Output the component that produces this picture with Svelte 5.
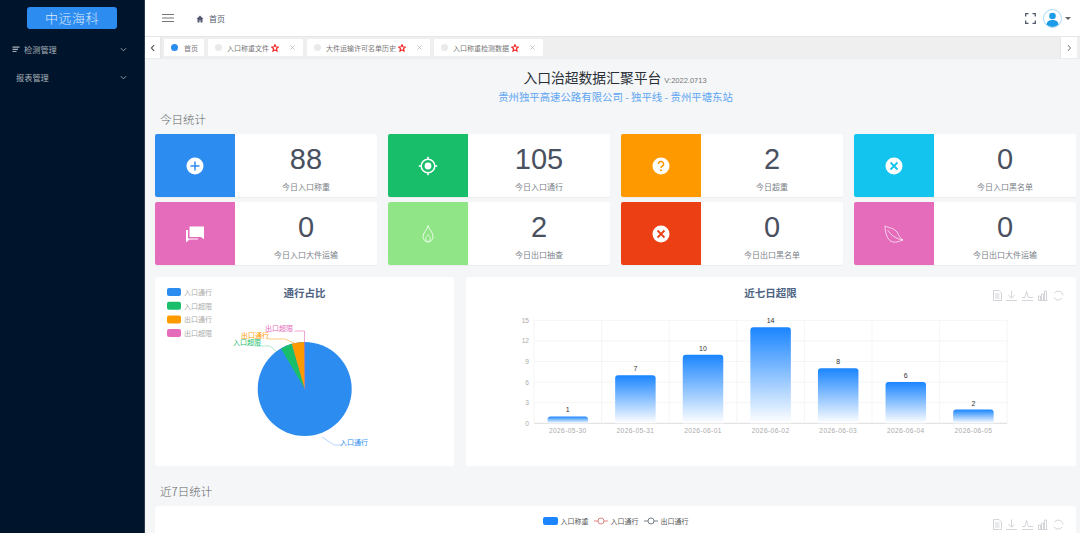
<script>
  const cards = [
    { n: '88', l: '今日入口称重', c: '#2d8cf0', i: 'plus' },
    { n: '105', l: '今日入口通行', c: '#19be6b', i: 'target' },
    { n: '2', l: '今日超重', c: '#ff9900', i: 'help' },
    { n: '0', l: '今日入口黑名单', c: '#13c4ef', i: 'close' },
    { n: '0', l: '今日入口大件运输', c: '#e46cbb', i: 'chat' },
    { n: '2', l: '今日出口抽查', c: '#90e686', i: 'flame' },
    { n: '0', l: '今日出口黑名单', c: '#ed3f14', i: 'close' },
    { n: '0', l: '今日出口大件运输', c: '#e46cbb', i: 'leaf' }
  ];
  const tabs = [
    { t: '入口称重文件', w: 95 },
    { t: '大件运输许可名单历史', w: 123 },
    { t: '入口称重检测数据', w: 109 }
  ];
  const legend = [
    { t: '入口通行', c: '#2d8cf0' },
    { t: '入口超限', c: '#19be6b' },
    { t: '出口通行', c: '#ff9900' },
    { t: '出口超限', c: '#e46cbb' }
  ];
  const X0 = 68, BAND = 67.6, Y0 = 146.3, H = 103;
  const bars = [
    { d: '2026-05-30', v: 1 },
    { d: '2026-05-31', v: 7 },
    { d: '2026-06-01', v: 10 },
    { d: '2026-06-02', v: 14 },
    { d: '2026-06-03', v: 8 },
    { d: '2026-06-04', v: 6 },
    { d: '2026-06-05', v: 2 }
  ];
  const ticks = [0, 3, 6, 9, 12, 15];
  const yOf = (v) => Y0 - (v / 15) * H;
  const barPath = (i, v) => {
    const x = X0 + BAND * i + (BAND - 40.5) / 2, y = yOf(v), r = 3;
    return `M${x} ${Y0}V${y + r}Q${x} ${y} ${x + r} ${y}H${x + 40.5 - r}Q${x + 40.5} ${y} ${x + 40.5} ${y + r}V${Y0}Z`;
  };
</script>

{#snippet tools()}
  <svg class="tools" viewBox="0 0 71 11" width="71" height="11" fill="none" stroke="#c8cacf" stroke-width="0.8">
    <path d="M.5.500h5.500l2.500 2.500v7.500h-8z M2 4h4.500M2 6h4.500M2 8h4.500" />
    <path d="M18.500.5v7.500M15.500 5.200l3 3 3-3M13 10.500h11" />
    <path d="M29 10.500h11M29 7.500h3l1.500-6 2 6h4.500" />
    <path d="M45 10.500h9.500M45.500 10v-4h2v4M48.500 10V4h2v6M51.500 10V1h2v9" />
    <path d="M69 3A4.600 4.600 0 0 0 61.200 3.500M61 7.500A4.600 4.600 0 0 0 69 8M69 3A4.600 4.600 0 0 1 70 5.500" />
  </svg>
{/snippet}

{#snippet star()}
  <svg class="star" viewBox="0 0 10 10" width="8" height="8">
    <path d="M5 .8l1.200 2.800 3 .3-2.300 2 .7 3L5 7.300 2.400 8.900l.7-3-2.300-2 3-.3z" fill="#fff" stroke="#f01414" stroke-width="1.300" />
  </svg>
{/snippet}

{#snippet icon(kind, color)}
  <svg viewBox="0 0 20 20" width="20" height="20" fill="none">
    {#if kind === 'plus'}
      <circle cx="10" cy="10" r="8.500" fill="#fff" />
      <path d="M10 5.500v9M5.500 10h9" stroke={color} stroke-width="1.500" />
    {:else if kind === 'target'}
      <circle cx="10" cy="10" r="6.800" stroke="#fff" stroke-width="1.500" />
      <circle cx="10" cy="10" r="3.400" fill="#fff" />
      <path d="M10 .8v2.500M10 16.700v2.500M.8 10h2.500M16.700 10h2.500" stroke="#fff" stroke-width="1.500" />
    {:else if kind === 'help'}
      <circle cx="10" cy="10" r="8.500" fill="#fff" />
      <path d="M7.500 8a2.500 2.500 0 1 1 3.700 2.200c-.8.500-1.200 1-1.200 1.800" stroke={color} stroke-width="1.500" />
      <circle cx="10" cy="14.300" r="1" fill={color} />
    {:else if kind === 'close'}
      <circle cx="10" cy="10" r="8.500" fill="#fff" />
      <path d="M6.500 6.500l7 7M13.500 6.500l-7 7" stroke={color} stroke-width="1.800" />
    {:else if kind === 'chat'}
      <path d="M4.500 2.500H19v12.800L16 13H4.500z" fill="#fff" />
      <path d="M1 6h2v8.500h10v1H4.500L1 18.500z" fill="#fff" />
    {:else if kind === 'flame'}
      <path d="M10 1.500c.5 3 5 6.500 5 11a5 5.500 0 0 1-10 0c0-4 4.500-6.500 5-11z" stroke="#fff" stroke-width=".8" />
      <path d="M10 10.500c-.8 1.500-2.300 2.500-2.300 4.500a2.300 2.500 0 0 0 4.600 0c0-2-1.500-3-2.300-4.500z" stroke="#fff" stroke-width=".6" />
    {:else if kind === 'leaf'}
      <path d="M1 2C5 4 10 4 13 8C15 11 16 15 19 16C15 17.500 11 19 7.500 17.500C3 15.500 1 8 1 2z" stroke="#fff" stroke-width=".7" />
      <path d="M3.500 6C7 11 12 15 19 16" stroke="#fff" stroke-width=".7" />
    {/if}
  </svg>
{/snippet}

<div class="app">
  <aside class="side">
    <div class="logo">中远海科</div>
    <div class="menu one">
      <svg viewBox="0 0 8 8" width="8" height="8"><path d="M.5 1.500h7v1.200h-7zM.5 3.700h5.500v1.200H.5zM.5 5.900h4v1.200h-4z" fill="#a8b0ba" /></svg>
      <span>检测管理</span>
      <svg class="chev" viewBox="0 0 8 8" width="7" height="7"><path d="M1 2.500l3 3 3-3" fill="none" stroke="#a8b0ba" /></svg>
    </div>
    <div class="menu two">
      <span>报表管理</span>
      <svg class="chev" viewBox="0 0 8 8" width="7" height="7"><path d="M1 2.500l3 3 3-3" fill="none" stroke="#a8b0ba" /></svg>
    </div>
  </aside>

  <main class="main">
    <header class="top">
      <svg class="burger" viewBox="0 0 12 8" width="12" height="8"><path d="M0 .5h12M0 4h12M0 7.500h12" stroke="#777" stroke-width="1" /></svg>
      <svg class="home" viewBox="0 0 8 8" width="8" height="8"><path d="M4 .5L.5 4h1v3.500h2V5.200h1v2.300h2V4h1z" fill="#515a6e" /></svg>
      <span class="crumb">首页</span>
      <svg class="full" viewBox="0 0 11 11" width="11" height="11" fill="none" stroke="#515a6e" stroke-width="1.300"><path d="M.7 3.500V.7h2.800M7.500.7h2.800v2.800M10.300 7.500v2.800H7.500M3.500 10.300H.7V7.500" /></svg>
      <svg class="avatar" viewBox="0 0 19 19" width="19" height="19">
        <circle cx="9.500" cy="9.500" r="9" fill="#fff" stroke="#8fd0f5" stroke-width=".8" />
        <circle cx="9.500" cy="7" r="3.300" fill="#1c9be6" />
        <path d="M3.500 15.500c.5-3.500 3-4.500 6-4.500s5.500 1 6 4.500a8.500 8.500 0 0 1-12 0z" fill="#1c9be6" />
      </svg>
      <span class="caret"></span>
    </header>

    <nav class="tabbar">
      <div class="arrow"><svg viewBox="0 0 8 10" width="6" height="8"><path d="M5.500 1L2 5l3.500 4" fill="none" stroke="#444" stroke-width="1.500" /></svg></div>
      <div class="tabs">
        <div class="tab home-tab"><i class="dot on"></i><span>首页</span></div>
        {#each tabs as t}
          <div class="tab" style="width:{t.w}px">
            <i class="dot"></i><span>{t.t}</span>{@render star()}
            <svg class="x" viewBox="0 0 6 6" width="5" height="5"><path d="M.5.500l5 5M5.500.5l-5 5" stroke="#aaa" stroke-width=".7" /></svg>
          </div>
        {/each}
      </div>
      <div class="arrow right"><svg viewBox="0 0 8 10" width="6" height="8"><path d="M2.500 1L6 5 2.500 9" fill="none" stroke="#555" stroke-width="1.100" /></svg></div>
    </nav>

    <section class="content">
      <div class="title">
        <h1>入口治超数据汇聚平台</h1><small>V:2022.0713</small>
      </div>
      <p class="sub">贵州独平高速公路有限公司 - 独平线 - 贵州平塘东站</p>
      <h2>今日统计</h2>

      <div class="cards">
        {#each cards as c}
          <div class="card">
            <div class="ico" style="background:{c.c}">{@render icon(c.i, c.c)}</div>
            <div class="info">
              <div class="num">{c.n}</div>
              <div class="lab">{c.l}</div>
            </div>
          </div>
        {/each}
      </div>

      <div class="charts">
        <div class="panel">
          <svg viewBox="0 0 299 189" width="299" height="189">
            {#each legend as l, i}
              <rect x="12" y={11 + i * 13.700} width="14" height="8" rx="2" fill={l.c} />
              <text x="29" y={18 + i * 13.700} class="lg">{l.t}</text>
            {/each}
            <text x="149.500" y="20" class="ct">通行占比</text>
            <circle cx="149.700" cy="112" r="47" fill="#2d8cf0" />
            <path d="M149.700 112L126 71.600A47 47 0 0 1 136.700 66.800Z" fill="#19be6b" />
            <path d="M149.700 112L136.700 66.800A47 47 0 0 1 149.300 65Z" fill="#ff9900" />
            <path d="M149.700 112V65" stroke="#e46cbb" stroke-width=".5" />
            <path d="M122 75l-7-6h-15" fill="none" stroke="#19be6b" stroke-width=".5" opacity=".7" />
            <path d="M141 67l-11-5h-17" fill="none" stroke="#ff9900" stroke-width=".5" />
            <path d="M149.500 65V54h-10" fill="none" stroke="#e46cbb" stroke-width=".6" />
            <path d="M167 160l12 8h9" fill="none" stroke="#2d8cf0" stroke-width=".5" opacity=".7" />
            <text x="110" y="54" class="pl" fill="#e46cbb">出口超限</text>
            <text x="86" y="61" class="pl" fill="#ff9900">出口通行</text>
            <text x="78" y="68" class="pl" fill="#19be6b">入口超限</text>
            <text x="185" y="168" class="pl" fill="#2d8cf0">入口通行</text>
          </svg>
        </div>

        <div class="panel">
          <svg viewBox="0 0 610 189" width="610" height="189">
            <defs>
              <linearGradient id="barg" x1="0" y1="0" x2="0" y2="1">
                <stop offset="0" stop-color="#1a85ff" />
                <stop offset="1" stop-color="#ffffff" />
              </linearGradient>
            </defs>
            <text x="304.500" y="20" class="ct">近七日超限</text>
            {#each ticks as t}
              <path d="M{X0} {yOf(t)}H{X0 + BAND * 7}" stroke={t ? '#f2f2f4' : '#dcdcdc'} stroke-width={t ? 0.800 : 1} />
              <text x={X0 - 5} y={yOf(t) + 2.500} class="ax" text-anchor="end">{t}</text>
            {/each}
            {#each Array(8) as _, i}
              <path d="M{X0 + BAND * i} {yOf(15)}V{Y0}" stroke="#f2f2f4" stroke-width=".8" />
            {/each}
            {#each bars as b, i}
              <path d={barPath(i, b.v)} fill="url(#barg)" />
              <text x={X0 + BAND * i + BAND / 2} y={yOf(b.v) - 4} class="val" text-anchor="middle">{b.v}</text>
              <text x={X0 + BAND * i + BAND / 2} y="156" class="ax date" text-anchor="middle">{b.d}</text>
            {/each}
          </svg>
          <div class="tb">{@render tools()}</div>
        </div>
      </div>

      <h2 class="h7">近7日统计</h2>
      <div class="panel last">
        <div class="lgd">
          <i class="sw"></i><span>入口称重</span>
          <svg viewBox="0 0 14 8" width="14" height="8"><path d="M0 4h4M10 4h4" stroke="#d9534f" stroke-width=".7" /><circle cx="7" cy="4" r="3" fill="#fff" stroke="#d9534f" stroke-width=".7" /></svg><span>入口通行</span>
          <svg viewBox="0 0 14 8" width="14" height="8"><path d="M0 4h4M10 4h4" stroke="#3d4a5a" stroke-width=".7" /><circle cx="7" cy="4" r="3" fill="#fff" stroke="#3d4a5a" stroke-width=".7" /></svg><span class="end">出口通行</span>
        </div>
        <div class="tb">{@render tools()}</div>
      </div>
    </section>
  </main>
</div>

<style>
  :global(body) { margin: 0; overflow: hidden; background: #f4f6f8; }
  .app {
    display: flex; width: 1080px; height: 533px; overflow: hidden;
    font-family: "Noto Sans CJK SC", "Liberation Sans", sans-serif;
  }
  .side { width: 144px; flex: none; background: #00152b; border-right: 1px solid #2a3a4c; }
  .logo {
    margin: 7px 27px 0; height: 22px; border-radius: 3px; background: #2d8cf0; color: #dbe9fb;
    font-size: 13px; font-weight: 300; line-height: 22px; text-align: center; letter-spacing: .5px;
  }
  .menu {
    display: flex; align-items: center; gap: 4px; height: 14px; color: #a8b0ba; font-size: 8.200px;
    padding: 0 17px 0 12px;
  }
  .menu.one { margin-top: 13px; }
  .menu.two { margin-top: 14px; padding-left: 16px; }
  .chev { margin-left: auto; }

  .main { flex: 1; min-width: 0; display: flex; flex-direction: column; }
  .top { height: 36px; flex: none; background: #fff; display: flex; align-items: center; padding-left: 17px; }
  .burger { margin-right: 22px; }
  .home { margin-right: 5px; margin-top: 1px; }
  .crumb { font-size: 8px; color: #515a6e; }
  .full { margin-left: auto; margin-right: 7px; }
  .caret {
    width: 0; height: 0; border: 3px solid transparent; border-top: 3.500px solid #666; border-bottom: 0;
    margin-right: 9px; margin-left: 3px;
  }

  .tabbar {
    height: 23px; flex: none; display: flex; background: #efefef; border-top: 1px solid #e6e6e6; box-sizing: border-box;
    border-bottom: 1px solid #ececec;
  }
  .arrow { width: 15px; background: #fff; display: flex; align-items: center; justify-content: center; flex: none; border-right: 2px solid #e9e9e9; box-sizing: content-box; }
  .arrow.right { margin-left: auto; margin-right: 3px; width: 16px; border-right: 0; border-left: 1px solid #e6e6e6; }
  .tabs { display: flex; gap: 4px; padding: 2px 0 0 2px; }
  .tab {
    height: 17px; background: #fff; display: flex; align-items: center; box-sizing: border-box; padding-left: 7px;
    font-size: 7px; color: #777; position: relative; border-radius: 1px;
  }
  .home-tab { width: 40px; }
  .dot { width: 7px; height: 7px; border-radius: 50%; background: #e8eaec; margin-right: 6px; flex: none; }
  .tab:not(.home-tab) span { margin-left: -1px; margin-right: 2px; }
  .dot.on { background: #2d8cf0; }
  .star { flex: none; }
  .x { margin-left: auto; margin-right: 8px; }

  .content { flex: 1; min-height: 0; background: #f4f6f8; padding: 7px 4px 0 10px; }
  .title { display: flex; justify-content: center; align-items: baseline; height: 23px; color: #2a2f36; padding-right: 1px; }
  h1 { margin: 0; font-size: 13.800px; font-weight: 400; line-height: 23px; }
  small { font-family: "Liberation Sans", sans-serif; font-size: 7.500px; color: #777; margin-left: 3px; }
  .sub { margin: 0; text-align: center; font-size: 10.400px; line-height: 15px; color: #5ea5f2; }
  h2 { margin: 6px 0 0 5px; font-size: 11.500px; font-weight: 300; line-height: 18px; color: #666; height: 18px; }
  .cards { display: grid; grid-template-columns: repeat(4, 222px); gap: 5px 11px; margin-top: 6px; }
  .card {
    height: 63px; background: #fff; display: flex; border-radius: 2px; overflow: hidden;
    box-shadow: 0 1px 1px rgba(0, 0, 0, .04);
  }
  .ico { width: 80px; flex: none; display: flex; align-items: center; justify-content: center; }
  .info { flex: 1; text-align: center; color: #495060; }
  .num { font-family: "Liberation Sans", sans-serif; font-size: 29px; line-height: 32px; margin-top: 9px; }
  .lab { font-size: 8px; line-height: 12px; color: #7a8088; margin-top: 6px; }
  .charts { display: grid; grid-template-columns: 299px 610px; gap: 12px; margin-top: 12px; }
  .panel { background: #fff; height: 189px; border-radius: 3px; position: relative; overflow: hidden; }
  .panel svg { display: block; }
  .tb { position: absolute; right: 12px; top: 13px; }
  .lg { font-size: 7px; fill: #aaa; }
  .ct { font-size: 10.500px; font-weight: 700; fill: #4d6382; text-anchor: middle; }
  .pl { font-size: 7px; }
  .ax { font-family: "Liberation Sans", sans-serif; font-size: 6.600px; fill: #aaa; }
  .ax.date { letter-spacing: .4px; }
  .val { font-family: "Liberation Sans", sans-serif; font-size: 7px; fill: #333; }
  h2.h7 { margin-top: 16px; }
  .panel.last { height: 60px; margin-top: 6px; width: 921px; }
  .lgd { display: flex; justify-content: center; align-items: center; gap: 3px; font-size: 7px; color: #555; padding-top: 11px; height: 8px; }
  .lgd span { margin-right: 2px; }
  .lgd span.end { margin-right: 0; }
  .lgd .sw { width: 15px; height: 8px; background: #1a85ff; border-radius: 2px; }
</style>
